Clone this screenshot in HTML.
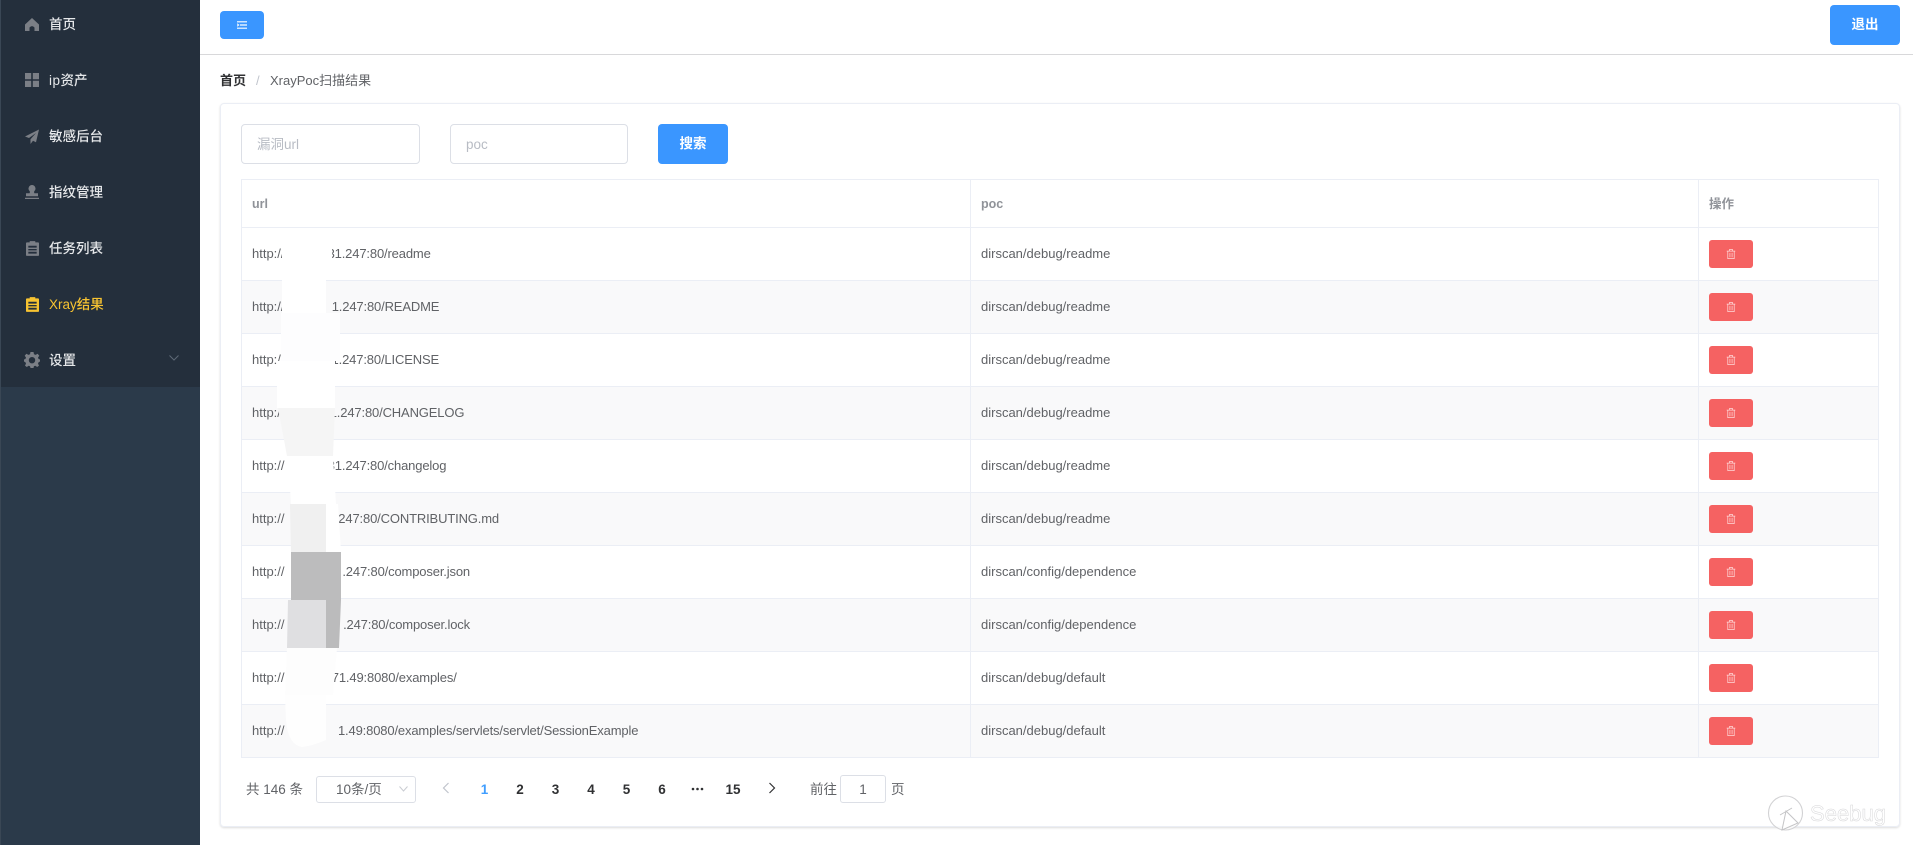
<!DOCTYPE html>
<html lang="zh"><head><meta charset="utf-8"><title>XrayPoc扫描结果</title>
<style>
*{box-sizing:border-box}
html,body{margin:0;padding:0;width:1913px;height:845px;overflow:hidden;background:#fff;font-family:"Liberation Sans","Noto Sans CJK SC",sans-serif;color:#606266}
.abs{position:absolute}
#side{position:absolute;left:0;top:0;width:200px;height:845px;background:#2b3a4a;border-left:1px solid #3a4755}
#menu{position:absolute;left:0;top:0;width:199px;height:387px;background:#242f3c}
.mi{position:absolute;left:48px;font-size:13.5px;line-height:20px;color:#e6e8ea;white-space:nowrap;font-weight:500}
.ic{position:absolute;left:24px;width:14px;height:14px;fill:#7b7f86}
.btn{position:absolute;background:#3a96ff;border-radius:4px;color:#fff;text-align:center;font-size:13.5px;font-weight:700}
#hdr{position:absolute;left:200px;right:0;top:54px;height:1px;background:#d8d8da}
#card{position:absolute;left:220px;top:103px;width:1680px;height:724px;border:1px solid #ebeef5;border-radius:4px;box-shadow:0 1px 2px rgba(0,0,0,.14)}
.inp{position:absolute;top:124px;height:40px;border:1px solid #dcdfe6;border-radius:4px;background:#fff;font-size:13.5px;line-height:39px;color:#b8bcc4;padding-left:15px}
#tb{position:absolute;left:241px;top:179px;width:1638px;height:579px;border:1px solid #ebeef5;border-bottom:0;border-right:0}
.row{position:absolute;left:0;width:1637px;height:53px;border-bottom:1px solid #ebeef5;font-size:13px;line-height:52px}
.row.alt{background:#f9f9fa}
.row div{position:absolute;top:0;bottom:-1px;white-space:nowrap;overflow:visible}
.c1{left:0;width:729px;padding-left:10px;border-right:1px solid #ebeef5}
.c2{left:729px;width:728px;padding-left:10px;border-right:1px solid #ebeef5}
.c3{left:1457px;width:180px;border-right:1px solid #ebeef5}
.s{position:absolute;left:0;top:0;text-align:right;letter-spacing:-.15px}
.hd{height:48px;line-height:49px;color:#909399;font-weight:700;font-size:12.5px}
.del{position:absolute;left:10px;top:11.5px;width:44px;height:28px;background:#f56262;border-radius:3px}
.del svg{position:absolute;left:17px;top:8px;width:10px;height:12px;fill:none;stroke:#ffd9d9;stroke-width:1}
.pg{position:absolute;top:780px;font-size:13.5px;line-height:20px;color:#303133;font-weight:700;transform:translateX(-50%)}
.t{position:absolute;font-size:13.5px;line-height:20px;color:#606266;white-space:nowrap}
.b{font-size:13px}
</style></head><body>
<div id="side">
<div id="menu"></div>
<svg class="ic" style="top:18px;height:13px" viewBox="0 0 14 13"><path d="M7 0 0 6.500V13H4.500V9.500Q7 6.800 9.500 9.500V13H14V6.500Z"/></svg>
<div class="mi" style="top:15px">首页</div>
<svg class="ic" style="top:73px" viewBox="0 0 14 14"><path d="M0 0H6.200V6.200H0ZM7.800 0H14V6.200H7.800ZM0 7.800H6.200V14H0ZM7.800 7.800H14V14H7.800Z"/></svg>
<div class="mi" style="top:71px"><span style="letter-spacing:.5px">ip</span>资产</div>
<svg class="ic" style="top:129px;height:15px" viewBox="0 0 14 15"><path d="M14 .5 0 7.500l4 1.500L11 4 5.500 10.200V15L8 11.800l3 1.400Z"/></svg>
<div class="mi" style="top:127px">敏感后台</div>
<svg class="ic" style="top:185px" viewBox="0 0 14 14"><path d="M7 0A3.500 3.500 0 0 1 9.400 6C9 6.600 9 7.400 9.400 8.300H13V11.200H1V8.300H4.600C5 7.400 5 6.600 4.600 6A3.500 3.500 0 0 1 7 0ZM0 12.700H14V14H0Z"/></svg>
<div class="mi" style="top:183px">指纹管理</div>
<svg class="ic" style="top:241px;left:25px;width:13px;height:15px" viewBox="0 0 14 16"><path fill-rule="evenodd" d="M4 0H10V1.400H13Q14 1.400 14 2.400V15Q14 16 13 16H1Q0 16 0 15V2.400Q0 1.400 1 1.400H4ZM2.500 5V7H11.500V5ZM2.500 8.500V10H11.500V8.500ZM2.500 11.500V13.500H11.500V11.500Z"/></svg>
<div class="mi" style="top:239px">任务列表</div>
<svg class="ic" style="top:297px;left:25px;width:13px;height:15px;fill:#f7c331" viewBox="0 0 14 16"><path fill-rule="evenodd" d="M4 0H10V1.400H13Q14 1.400 14 2.400V15Q14 16 13 16H1Q0 16 0 15V2.400Q0 1.400 1 1.400H4ZM2.500 5V7H11.500V5ZM2.500 8.500V10H11.500V8.500ZM2.500 11.500V13.500H11.500V11.500Z"/></svg>
<div class="mi" style="top:295px;color:#f7c331">Xray结果</div>
<svg class="ic" style="top:352px;left:23px;width:16px;height:16px" viewBox="0 0 16 16"><path fill-rule="evenodd" d="M6.500 0H9.500L10 2.200 11.600 2.900 13.600 1.700 15.300 3.800 14 5.500 14.600 7 16 7.500V9.500L14.600 10.200 14 11.600 15 13.600 13.200 15 11.300 13.800 9.900 14.300 9.500 16H6.500L6 14.300 4.600 13.800 2.800 15 1 13.600 2 11.600 1.400 10.200 0 9.500V7.500L1.400 7 2 5.500.7 3.800 2.400 1.700 4.400 2.900 6 2.200ZM8 5A3.200 3.200 0 1 0 8 11.400 3.200 3.200 0 1 0 8 5Z"/></svg>
<div class="mi" style="top:351px">设置</div>
<svg class="abs" style="left:167px;top:354px" width="12" height="8" viewBox="0 0 12 8"><path d="M1.500 1.500 6 6 10.500 1.500" fill="none" stroke="#5e6976" stroke-width="1"/></svg>
</div>

<div class="btn" style="left:220px;top:11px;width:44px;height:28px"><svg class="abs" style="left:17px;top:10px" width="10" height="8" viewBox="0 0 10 8" fill="none" stroke="#fff" stroke-width="1.200"><path d="M0 .8H10M3 4H10M0 7.200H10"/><path d="M0 2.800 1.800 4 0 5.200" stroke-width=".9"/></svg></div>
<div class="btn" style="left:1830px;top:5px;width:70px;height:40px;line-height:40px">退出</div>
<div id="hdr"></div>

<div class="t b" style="left:220px;top:71px;color:#303133;font-weight:700">首页</div>
<div class="t b" style="left:256px;top:71px;color:#c0c4cc">/</div>
<div class="t b" style="left:270px;top:71px">XrayPoc扫描结果</div>

<div id="card"></div>
<div class="inp" style="left:241px;width:179px">漏洞url</div>
<div class="inp" style="left:450px;width:178px">poc</div>
<div class="btn" style="left:658px;top:124px;width:70px;height:40px;line-height:40px">搜索</div>

<div id="tb">
<div class="row hd" style="top:0"><div class="c1">url</div><div class="c2">poc</div><div class="c3" style="padding-left:10px">操作</div></div>
<div class="row" style="top:48px"><div class="c1">http://<span class="s" style="width:188.700px">31.247:80/readme</span></div><div class="c2">dirscan/debug/readme</div><div class="c3"><span class="del"><svg viewBox="0 0 14 15"><path d="M2.500 4V14H11.500V4M1 3.500H13M5 3.500V1H9V3.500M5.500 6V12M8.500 6V12"/></svg></span></div></div>
<div class="row alt" style="top:101px"><div class="c1">http://<span class="s" style="width:197.300px">1.247:80/README</span></div><div class="c2">dirscan/debug/readme</div><div class="c3"><span class="del"><svg viewBox="0 0 14 15"><path d="M2.500 4V14H11.500V4M1 3.500H13M5 3.500V1H9V3.500M5.500 6V12M8.500 6V12"/></svg></span></div></div>
<div class="row" style="top:154px"><div class="c1">http://<span class="s" style="width:197px">1.247:80/LICENSE</span></div><div class="c2">dirscan/debug/readme</div><div class="c3"><span class="del"><svg viewBox="0 0 14 15"><path d="M2.500 4V14H11.500V4M1 3.500H13M5 3.500V1H9V3.500M5.500 6V12M8.500 6V12"/></svg></span></div></div>
<div class="row alt" style="top:207px"><div class="c1">http://<span class="s" style="width:222.300px">31.247:80/CHANGELOG</span></div><div class="c2">dirscan/debug/readme</div><div class="c3"><span class="del"><svg viewBox="0 0 14 15"><path d="M2.500 4V14H11.500V4M1 3.500H13M5 3.500V1H9V3.500M5.500 6V12M8.500 6V12"/></svg></span></div></div>
<div class="row" style="top:260px"><div class="c1">http://<span class="s" style="width:204.300px">31.247:80/changelog</span></div><div class="c2">dirscan/debug/readme</div><div class="c3"><span class="del"><svg viewBox="0 0 14 15"><path d="M2.500 4V14H11.500V4M1 3.500H13M5 3.500V1H9V3.500M5.500 6V12M8.500 6V12"/></svg></span></div></div>
<div class="row alt" style="top:313px"><div class="c1">http://<span class="s" style="width:257px">1.247:80/CONTRIBUTING.md</span></div><div class="c2">dirscan/debug/readme</div><div class="c3"><span class="del"><svg viewBox="0 0 14 15"><path d="M2.500 4V14H11.500V4M1 3.500H13M5 3.500V1H9V3.500M5.500 6V12M8.500 6V12"/></svg></span></div></div>
<div class="row" style="top:366px"><div class="c1">http://<span class="s" style="width:228px">.247:80/composer.json</span></div><div class="c2">dirscan/config/dependence</div><div class="c3"><span class="del"><svg viewBox="0 0 14 15"><path d="M2.500 4V14H11.500V4M1 3.500H13M5 3.500V1H9V3.500M5.500 6V12M8.500 6V12"/></svg></span></div></div>
<div class="row alt" style="top:419px"><div class="c1">http://<span class="s" style="width:228px">.247:80/composer.lock</span></div><div class="c2">dirscan/config/dependence</div><div class="c3"><span class="del"><svg viewBox="0 0 14 15"><path d="M2.500 4V14H11.500V4M1 3.500H13M5 3.500V1H9V3.500M5.500 6V12M8.500 6V12"/></svg></span></div></div>
<div class="row" style="top:472px"><div class="c1">http://<span class="s" style="width:214.700px">71.49:8080/examples/</span></div><div class="c2">dirscan/debug/default</div><div class="c3"><span class="del"><svg viewBox="0 0 14 15"><path d="M2.500 4V14H11.500V4M1 3.500H13M5 3.500V1H9V3.500M5.500 6V12M8.500 6V12"/></svg></span></div></div>
<div class="row alt" style="top:525px"><div class="c1">http://<span class="s" style="width:396.300px">1.49:8080/examples/servlets/servlet/SessionExample</span></div><div class="c2">dirscan/debug/default</div><div class="c3"><span class="del"><svg viewBox="0 0 14 15"><path d="M2.500 4V14H11.500V4M1 3.500H13M5 3.500V1H9V3.500M5.500 6V12M8.500 6V12"/></svg></span></div></div>
</div>

<svg class="abs" style="left:0;top:0" width="1913" height="845" viewBox="0 0 1913 845">
<path d="M282 240H332V265H326V313H282Z" fill="#fff"/>
<path d="M281 313H340V361H281Z" fill="#fdfdfe"/>
<path d="M277 361H335V408H277Z" fill="#fff"/>
<path d="M278 408H335L333 456H287Z" fill="#f5f5f5"/>
<path d="M288 456H333L336 504H291Z" fill="#fff"/>
<path d="M290 504H326V552H291Z" fill="#f0f0f0"/>
<path d="M326 504H338L341 552H326Z" fill="#fff"/>
<path d="M291 552H341V600H291Z" fill="#bcbcbd"/>
<path d="M288 600H326V648H287Z" fill="#dfdfe1"/>
<path d="M326 600H341L339 648H326Z" fill="#bbbbbc"/>
<path d="M287 648H337L333 695H285Z" fill="#fdfdfd"/>
<path d="M285 695H326V740Q312 746 302 747 288 745 286 720Z" fill="#fefefe"/>
</svg>

<div class="t" style="left:246px;top:780px">共 146 条</div>
<div class="abs" style="left:316px;top:776px;width:100px;height:27px;border:1px solid #dcdfe6;border-radius:3px"></div>
<div class="t" style="left:336px;top:780px">10条/页</div>
<svg class="abs" style="left:398px;top:785px" width="11" height="8" viewBox="0 0 11 8"><path d="M1.500 1.500 5.500 6 9.500 1.500" fill="none" stroke="#c9ccd2"/></svg>
<svg class="abs" style="left:442px;top:782px" width="8" height="12" viewBox="0 0 8 12"><path d="M6.500 1 1.500 6 6.500 11" fill="none" stroke="#c0c4cc" stroke-width="1.200"/></svg>
<div class="pg" style="left:484.500px;color:#409eff">1</div>
<div class="pg" style="left:520px">2</div>
<div class="pg" style="left:555.500px">3</div>
<div class="pg" style="left:591px">4</div>
<div class="pg" style="left:626.500px">5</div>
<div class="pg" style="left:662px">6</div>
<svg class="abs" style="left:691px;top:787px" width="13" height="4" viewBox="0 0 13 4" fill="#303133"><circle cx="2" cy="2" r="1.300"/><circle cx="6.500" cy="2" r="1.300"/><circle cx="11" cy="2" r="1.300"/></svg>
<div class="pg" style="left:733px">15</div>
<svg class="abs" style="left:768px;top:782px" width="8" height="12" viewBox="0 0 8 12"><path d="M1.500 1 6.500 6 1.500 11" fill="none" stroke="#303133" stroke-width="1.200"/></svg>
<div class="t" style="left:810px;top:780px">前往</div>
<div class="abs" style="left:840px;top:775px;width:46px;height:28px;border:1px solid #dcdfe6;border-radius:3px;font-size:13.5px;line-height:27px;text-align:center;color:#606266">1</div>
<div class="t" style="left:891px;top:780px">页</div>

<svg class="abs" style="left:1760px;top:790px" width="140" height="55" viewBox="0 0 140 55">
<circle cx="25.500" cy="23" r="17" fill="rgba(255,255,255,.75)" stroke="#d2d2d4" stroke-width="1.100"/>
<path d="M20 25 32 18M26 21 22 40 38 33Z" fill="#fff" stroke="#c4c4c6" stroke-width="1"/>
<text x="50" y="31" font-family="Liberation Sans,sans-serif" font-size="22" fill="#fff" stroke="#d6d6d8" stroke-width=".5" textLength="76">Seebug</text>
</svg>
</body></html>
